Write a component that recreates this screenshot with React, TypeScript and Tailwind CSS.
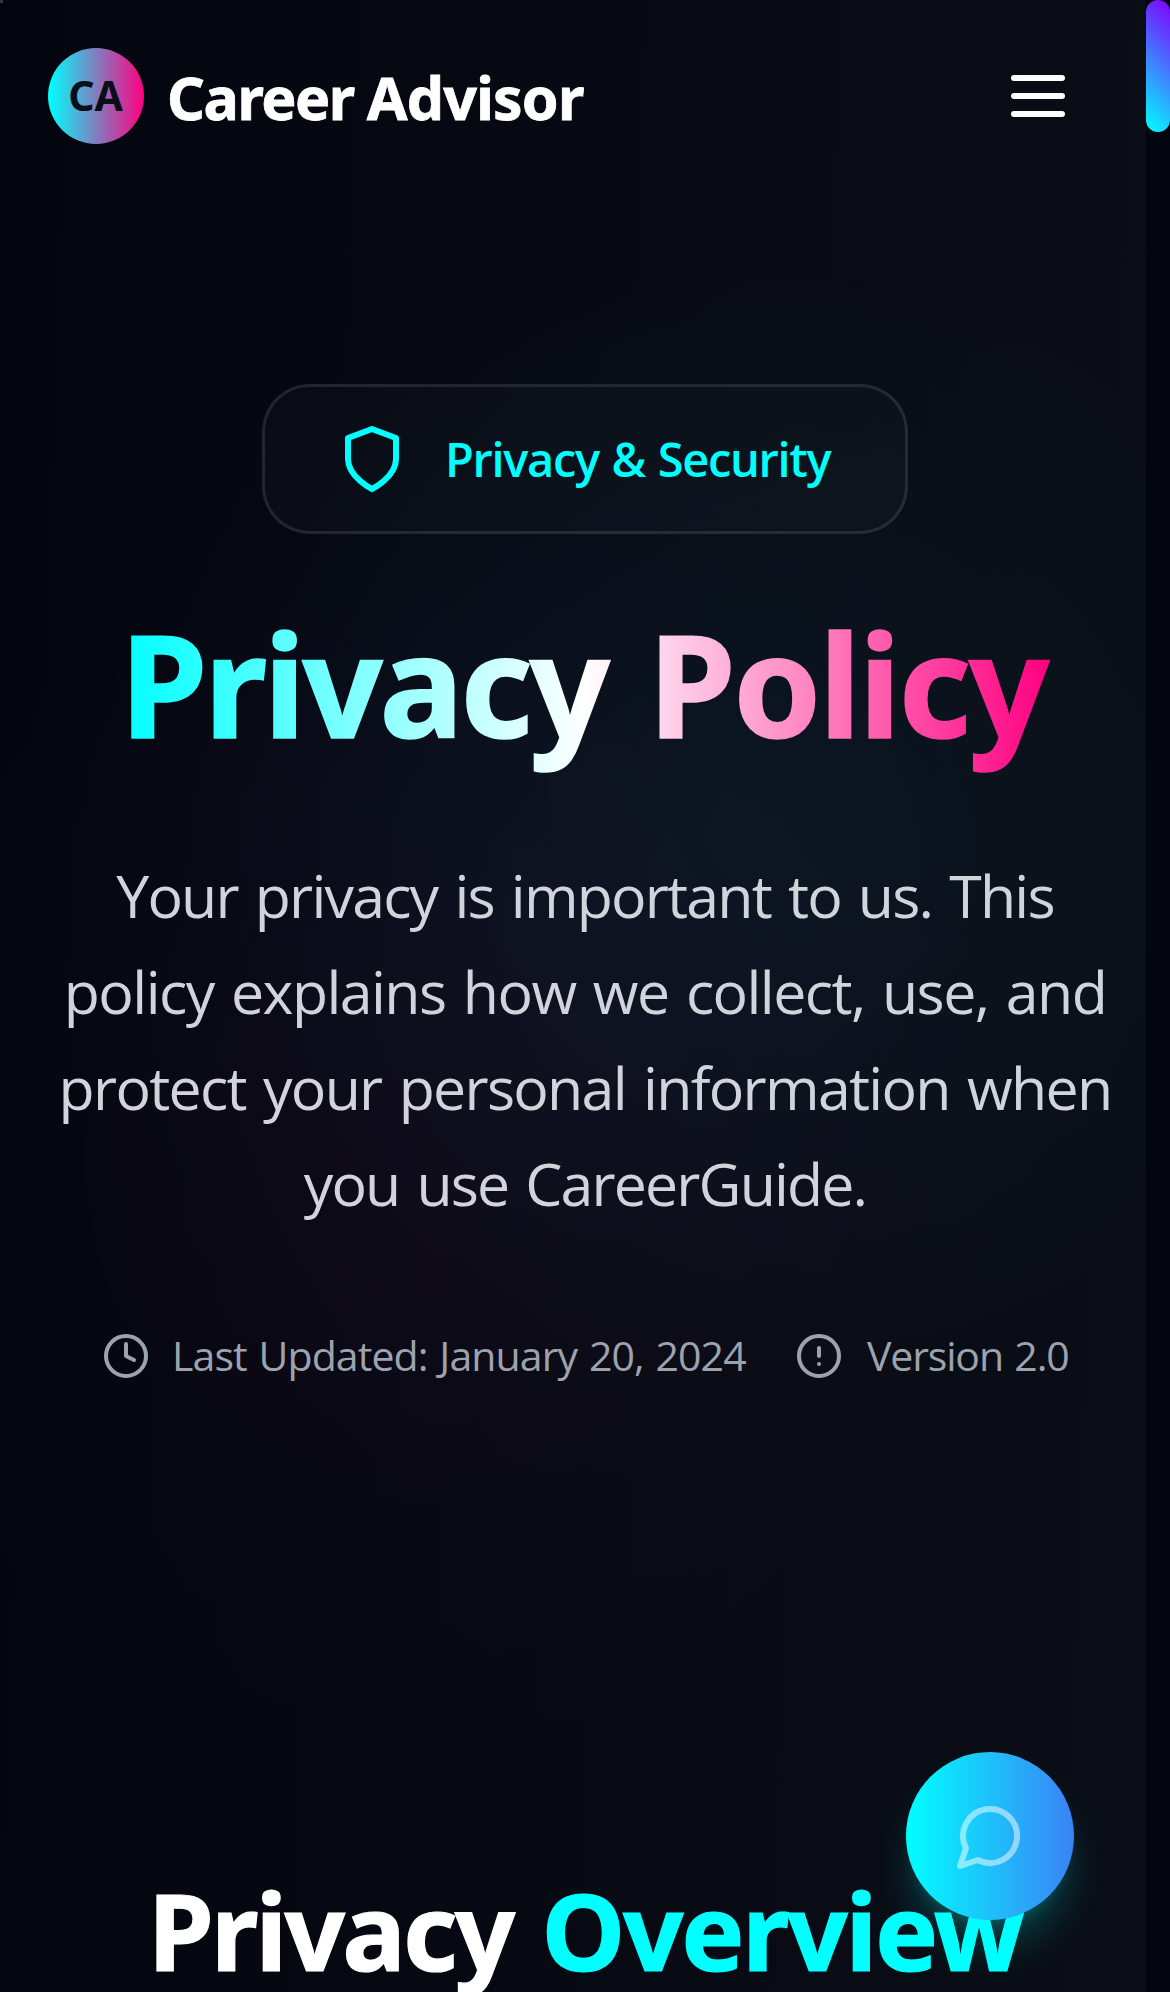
import type { ReactNode } from "react";

function Icon({ className, strokeWidth = 2, children }: { className: string; strokeWidth?: number; children: ReactNode }) {
  return (
    <svg
      className={className}
      viewBox="0 0 24 24"
      fill="none"
      stroke="currentColor"
      strokeWidth={strokeWidth}
      strokeLinecap="round"
      strokeLinejoin="round"
    >
      {children}
    </svg>
  );
}

function Header() {
  return (
    <header className="flex h-[192px] items-center justify-between pl-12 pr-[105px]">
      <div className="flex items-center">
        <div className="flex h-24 w-24 items-center justify-center rounded-full bg-[linear-gradient(90deg,#00ffff,#ff0080)]">
          <span className="pb-0.5 pr-px text-[41px] font-bold leading-none text-[#0a0e17]">CA</span>
        </div>
        <span className="ml-[23px] whitespace-nowrap pt-0.5 text-[59px] font-bold leading-[72px] tracking-[-1.4px] text-white [-webkit-text-stroke:0.8px_#fff]">
          Career <span className="-ml-px tracking-[-0.8px]">Advisor</span>
        </span>
      </div>
      <button className="flex flex-col gap-3" aria-label="Menu">
        <span className="h-1.5 w-[54px] rounded-[3px] bg-white" />
        <span className="h-1.5 w-[54px] rounded-[3px] bg-white" />
        <span className="h-1.5 w-[54px] rounded-[3px] bg-white" />
      </button>
    </header>
  );
}

function Hero() {
  return (
    <section className="flex flex-col items-center pt-[192px]">
      <div className="flex h-[150px] w-[646px] items-center gap-[37px] rounded-[48px] border-[3px] border-white/10 bg-white/[0.02] pl-[71px] text-[#00ffff]">
        <Icon className="h-[72px] w-[72px] shrink-0">
          <path d="M12 22s8-4 8-10V5l-8-3-8 3v7c0 6 8 10 8 10" />
        </Icon>
        <span className="whitespace-nowrap font-['Open_Sans'] text-[47px] font-semibold leading-[72px] tracking-[-1.35px] [word-spacing:2px]">
          Privacy &amp; Security
        </span>
      </div>

      <h1 className="mt-[59px] w-[932px] whitespace-nowrap bg-[linear-gradient(90deg,#00ffff_0%,#ffffff_50%,#ff0080_100%)] bg-clip-text pl-px text-[141px] font-bold leading-[180px] text-transparent [-webkit-text-stroke:1.5px_transparent]">
        <span className="tracking-[-3.5px]">Privacy</span> <span className="ml-[5px] tracking-[-2.4px]">Policy</span>
      </h1>

      <p className="mt-[74px] flex flex-col items-center whitespace-nowrap font-['Open_Sans'] text-[59px] leading-[96px] text-[#d1d5db] [word-spacing:3.5px]">
        <span className="tracking-[-1.8px]">Your privacy is important to us. This</span>
        <span className="tracking-[-1.55px]">policy explains how we collect, use, and</span>
        <span className="tracking-[-1.7px]">protect your personal information when</span>
        <span className="tracking-[-1.85px]">you use CareerGuide.</span>
      </p>

      <div className="mt-[95px] flex h-[60px] w-full items-center pl-[102px] font-['Open_Sans'] text-[41px] leading-[60px] text-[#9ca3af] [word-spacing:2px]">
        <div className="flex w-[693px] items-center gap-[22px]">
          <Icon className="h-12 w-12 shrink-0">
            <circle cx="12" cy="12" r="10" />
            <path d="M12 6v6l4 2" />
          </Icon>
          <span className="whitespace-nowrap pb-0.5 tracking-[-0.9px]">Last Updated: January 20, 2024</span>
        </div>
        <div className="flex items-center gap-6">
          <Icon className="h-12 w-12 shrink-0">
            <circle cx="12" cy="12" r="10" />
            <path d="M12 8v4M12 16h.01" />
          </Icon>
          <span className="whitespace-nowrap pb-0.5 tracking-[-1.15px]">Version 2.0</span>
        </div>
      </div>
    </section>
  );
}

function Overview() {
  return (
    <h2 className="mt-[484px] whitespace-nowrap pl-[148px] text-[106px] font-bold leading-[120px] text-white [-webkit-text-stroke:1.2px_currentColor]">
      <span className="tracking-[-2.8px]">Privacy</span>{" "}
      <span className="ml-[1.4px] tracking-[-2.3px] text-[#00ffff] [-webkit-text-stroke:1.2px_#00ffff]">Overview</span>
    </h2>
  );
}

export default function App() {
  return (
    <div className="relative h-[1992px] w-[1170px] overflow-hidden bg-[linear-gradient(92deg,#03060f_0%,#0b0e16_100%)] font-['Noto_Sans',sans-serif]">
      {/* Ambient glow behind the hero */}
      <div className="absolute inset-0 bg-[radial-gradient(circle_at_780px_820px,rgba(0,255,255,0.03),transparent_580px),radial-gradient(circle_at_430px_1160px,rgba(255,0,128,0.03),transparent_620px),radial-gradient(circle_at_585px_900px,rgba(80,110,220,0.05),transparent_600px)]" />
      <div className="relative">
        <Header />
        <Hero />
        <Overview />
      </div>

      <div className="absolute left-0 top-0 h-[3px] w-[3px] bg-[#33363f]" />

      <button
        aria-label="Chat"
        className="absolute left-[906px] top-[1752px] flex h-[168px] w-[168px] items-center justify-center rounded-full bg-[linear-gradient(90deg,#00ffff,#3b82f6)] shadow-[0_30px_45px_-9px_rgba(0,255,255,0.25),0_12px_18px_-12px_rgba(0,255,255,0.25)]"
      >
        <Icon className="h-[72px] w-[72px] text-white/50">
          <path d="M7.9 20A9 9 0 1 0 4 16.1L2 22Z" />
        </Icon>
      </button>

      {/* Scrollbar */}
      <div className="absolute right-0 top-0 h-full w-6 bg-[#03060e]">
        <div className="h-[132px] rounded-full bg-[linear-gradient(45deg,#00ffff,#8000ff)]" />
      </div>
    </div>
  );
}
